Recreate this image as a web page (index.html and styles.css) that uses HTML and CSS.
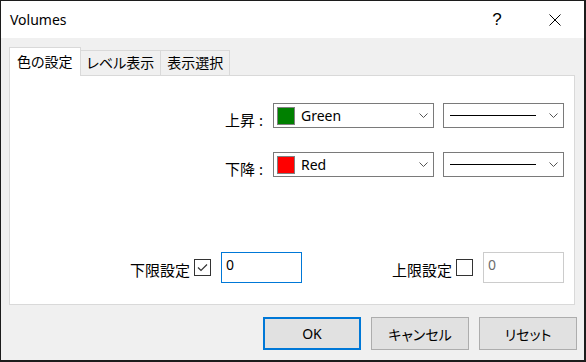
FILE: index.html
```html
<!DOCTYPE html>
<html lang="ja">
<head>
    <meta charset="UTF-8">
    <title>Volumes</title>
    <link rel="stylesheet" href="styles.css">
</head>
<body>
    <div class="window">
        <!-- Barra de titulo -->
        <div class="titlebar">
            <span class="title">Volumes</span>
            <span class="help">?</span>
            <span class="close">
                <svg width="12" height="12" viewBox="0 0 12 12"><path d="M0.5 0.5 L11.5 11.5 M11.5 0.5 L0.5 11.5" stroke="#000" stroke-width="1" fill="none"/></svg>
            </span>
        </div>
        <div class="content">
            <div class="tabs">
                <div class="tab active">色の設定</div>
                <div class="tab">レベル表示</div>
                <div class="tab">表示選択</div>
            </div>
            <div class="panel">
                <div class="row">
                    <span class="label">上昇 :</span>
                    <div class="combo color-combo">
                        <span class="swatch green"></span>
                        <span class="combo-text">Green</span>
                        <svg class="chevron" width="9" height="5" viewBox="0 0 9 5"><path d="M0.5 0.5 L4.5 4.5 L8.5 0.5" stroke="#555" fill="none"/></svg>
                    </div>
                    <div class="combo style-combo">
                        <span class="line"></span>
                        <svg class="chevron" width="9" height="5" viewBox="0 0 9 5"><path d="M0.5 0.5 L4.5 4.5 L8.5 0.5" stroke="#555" fill="none"/></svg>
                    </div>
                </div>
                <div class="row second">
                    <span class="label">下降 :</span>
                    <div class="combo color-combo">
                        <span class="swatch red"></span>
                        <span class="combo-text">Red</span>
                        <svg class="chevron" width="9" height="5" viewBox="0 0 9 5"><path d="M0.5 0.5 L4.5 4.5 L8.5 0.5" stroke="#555" fill="none"/></svg>
                    </div>
                    <div class="combo style-combo">
                        <span class="line"></span>
                        <svg class="chevron" width="9" height="5" viewBox="0 0 9 5"><path d="M0.5 0.5 L4.5 4.5 L8.5 0.5" stroke="#555" fill="none"/></svg>
                    </div>
                </div>
                <div class="limits">
                    <div class="limit">
                        <span class="limit-label">下限設定</span>
                        <span class="checkbox">
                            <svg width="15" height="15" viewBox="0 0 15 15"><path d="M3 7.5 L6 10.5 L12 4.5" stroke="#333" stroke-width="1.2" fill="none"/></svg>
                        </span>
                        <div class="field active-field">0</div>
                    </div>
                    <div class="limit">
                        <span class="limit-label">上限設定</span>
                        <span class="checkbox"></span>
                        <div class="field disabled-field">0</div>
                    </div>
                </div>
            </div>
            <div class="buttons">
                <button class="btn default">OK</button>
                <button class="btn">キャンセル</button>
                <button class="btn">リセット</button>
            </div>
        </div>
    </div>
</body>
</html>
```

FILE: styles.css
```css
body {
    margin: 0;
    padding: 0;
    background-color: #1c1c1c;
    font-family: "Noto Sans", "Noto Sans CJK JP", sans-serif;
    font-feature-settings: "palt";
}
.window {
    width: 583px;
    height: 359px;
    margin: 1px 0 0 1px;
    background-color: #f0f0f0;
}
.titlebar {
    height: 37px;
    background-color: #fff;
    display: flex;
    align-items: center;
    padding-left: 9px;
}
.title {
    font-size: 14px;
    color: #000;
    flex: 1;
}
.help {
    width: 46px;
    text-align: center;
    font-family: "Liberation Sans", sans-serif;
    font-size: 17px;
    margin-right: 12px;
}
.close {
    width: 46px;
    height: 37px;
    margin-right: 6px;
    display: flex;
    align-items: center;
    justify-content: center;
}
.content {
    padding-top: 10px;
}
.tabs {
    display: flex;
    align-items: flex-end;
    height: 27px;
    padding-left: 8px;
}
.tab {
    height: 24px;
    line-height: 23px;
    padding: 0 6px;
    margin-left: -1px;
    border: 1px solid #d9d9d9;
    border-bottom: none;
    background-color: #f0f0f0;
    font-size: 14px;
    color: #000;
}
.tab.active {
    position: relative;
    z-index: 1;
    height: 28px;
    line-height: 27px;
    margin-left: 0;
    margin-bottom: -1px;
    padding: 0 7px;
    background-color: #fff;
}
.panel {
    height: 230px;
    box-sizing: border-box;
    margin: 0 9px 0 8px;
    border: 1px solid #d9d9d9;
    background-color: #fff;
    display: flex;
    flex-direction: column;
    padding: 27px 10px 21px;
}
.row {
    display: flex;
    justify-content: flex-end;
    align-items: flex-end;
}
.row.second {
    margin-top: 24px;
}
.label {
    font-size: 15px;
    line-height: 18px;
    margin-right: 10px;
    margin-bottom: -1px;
}
.combo {
    height: 25px;
    box-sizing: border-box;
    border: 1px solid #7a7a7a;
    display: flex;
    align-items: center;
    background-color: #fff;
}
.color-combo {
    width: 161px;
    margin-right: 9px;
    padding-left: 3px;
}
.style-combo {
    width: 121px;
    padding-left: 6px;
}
.swatch {
    width: 18px;
    height: 18px;
    box-sizing: border-box;
    border: 1px solid #808080;
}
.swatch.green {
    background-color: #008000;
}
.swatch.red {
    background-color: #ff0000;
}
.combo-text {
    font-size: 14px;
    margin-left: 6px;
    flex: 1;
}
.line {
    width: 86px;
    height: 1px;
    background-color: #000;
    flex: none;
    margin-right: auto;
}
.chevron {
    margin-right: 5px;
}
.limits {
    margin-top: auto;
    display: flex;
    justify-content: flex-end;
    gap: 90px;
}
.limit {
    display: flex;
    align-items: center;
}
.limit-label {
    font-size: 15px;
    margin-right: 4px;
    padding-top: 3px;
}
.checkbox {
    width: 17px;
    height: 17px;
    box-sizing: border-box;
    border: 1px solid #333;
    margin-right: 10px;
    display: flex;
    align-items: center;
    justify-content: center;
    background-color: #fff;
}
.field {
    width: 81px;
    height: 31px;
    box-sizing: border-box;
    padding: 3px 4px;
    font-size: 14px;
    line-height: 18px;
}
.active-field {
    border: 1px solid #0078d7;
    color: #000;
}
.disabled-field {
    border: 1px solid #cccccc;
    color: #6d6d6d;
}
.buttons {
    display: flex;
    justify-content: flex-end;
    gap: 10px;
    margin-top: 12px;
    padding-right: 7px;
}
.btn {
    width: 98px;
    height: 33px;
    box-sizing: border-box;
    background-color: #e1e1e1;
    border: 1px solid #adadad;
    font-family: "Noto Sans", "Noto Sans CJK JP", sans-serif;
    font-feature-settings: "palt";
    font-size: 14px;
    color: #000;
    padding: 0;
}
.btn.default {
    border: 2px solid #0078d7;
}
```
